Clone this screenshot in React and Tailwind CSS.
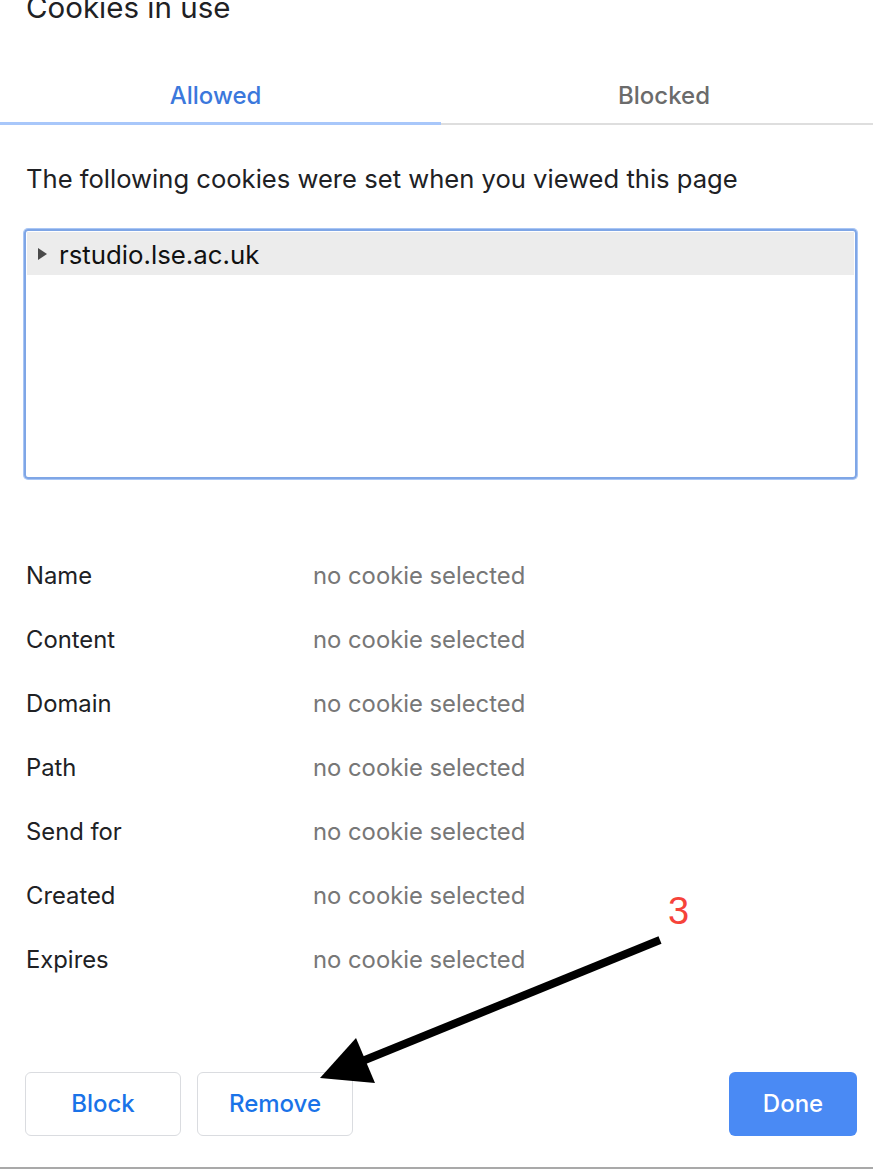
import React from "react";

const rows = ["Name", "Content", "Domain", "Path", "Send for", "Created", "Expires"];

export default function App() {
  return (
    <div
      className="relative w-[873px] h-[1169px] overflow-hidden bg-white"
      style={{ fontFamily: "Inter, 'Noto Sans', sans-serif" }}
    >
      <div className="h-[24px] pl-[26px] flex items-end">
        <div className="text-[29.5px] leading-[30px] text-[#202124] mb-[2px]">Cookies in use</div>
      </div>

      <div className="mt-[46px] flex">
        <div className="w-[441px] flex flex-col items-center">
          <div className="h-[52px] flex items-center pr-[10px] text-[24px] font-medium text-[#3b78dc]">Allowed</div>
          <div className="w-full h-[3px] bg-[#a8c7fa]"></div>
        </div>
        <div className="flex-1 flex flex-col items-center">
          <div className="h-[52px] flex items-center pl-[14px] text-[24px] font-medium text-[#6b6b6b]">Blocked</div>
          <div className="w-full h-[3px] flex flex-col justify-end">
            <div className="h-[2px] bg-[#dedede]"></div>
          </div>
        </div>
      </div>

      <div className="pl-[26px] mt-[38px] text-[25.6px] leading-[32px] text-[#202124]">
        The following cookies were set when you viewed this page
      </div>

      <div className="ml-[24px] mr-[16px] mt-[34px] h-[250px] rounded-[4px] border-[2px] border-[#7fa6e6] shadow-[0_0_0_1px_#a9c6f5] p-[1px]">
        <div className="h-[43px] bg-[#ececec] flex items-center pl-[10px] pt-[4px]">
          <svg width="11" height="14" viewBox="0 0 11 14" className="mr-[11px] -mt-[4px]">
            <path d="M1 1 L10 7 L1 13 Z" fill="#4a4a4a" />
          </svg>
          <span className="text-[25.8px] text-[#111]">rstudio.lse.ac.uk</span>
        </div>
      </div>

      <div className="mt-[65px] pl-[26px] flex flex-col">
        {rows.map((r) => (
          <div key={r} className="h-[64px] flex items-center text-[23.8px]">
            <div className="w-[287px] text-[#202124]">{r}</div>
            <div className="text-[#777]">no cookie selected</div>
          </div>
        ))}
      </div>

      <div className="mt-[80px] pl-[25px] pr-[16px] flex items-center">
        <button className="w-[156px] h-[64px] rounded-[6px] border border-[#dadce0] text-[24px] font-medium text-[#1a73e8] bg-white">
          Block
        </button>
        <button className="ml-[16px] w-[156px] h-[64px] rounded-[6px] border border-[#dadce0] text-[24px] font-medium text-[#1a73e8] bg-white">
          Remove
        </button>
        <div className="flex-1"></div>
        <button className="w-[128px] h-[64px] rounded-[6px] bg-[#4a8af4] text-[24px] font-medium text-white">
          Done
        </button>
      </div>

      <div className="absolute left-0 right-0 bottom-0 h-[2px] bg-[#a9a9a9]"></div>

      <div
        className="absolute left-[668px] top-[889px] text-[38px] leading-[44px] text-[#f6433a]"
        style={{ fontFamily: "'Liberation Sans', Arial, sans-serif" }}
      >
        3
      </div>
      <svg className="absolute left-0 top-0" width="873" height="1169" viewBox="0 0 873 1169">
        <line x1="660" y1="940" x2="360" y2="1062" stroke="#000" strokeWidth="8" />
        <polygon points="320,1078 356,1038 375,1083" fill="#000" />
      </svg>
    </div>
  );
}
